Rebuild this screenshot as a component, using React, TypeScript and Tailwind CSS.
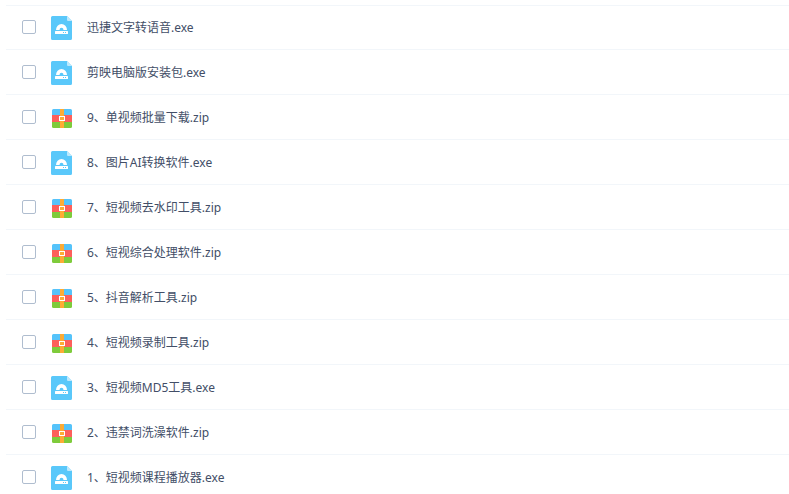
import { useState } from 'react';

type FileItem = { name: string; type: 'exe' | 'zip' };

const files: FileItem[] = [
  { name: '迅捷文字转语音.exe', type: 'exe' },
  { name: '剪映电脑版安装包.exe', type: 'exe' },
  { name: '9、单视频批量下载.zip', type: 'zip' },
  { name: '8、图片AI转换软件.exe', type: 'exe' },
  { name: '7、短视频去水印工具.zip', type: 'zip' },
  { name: '6、短视综合处理软件.zip', type: 'zip' },
  { name: '5、抖音解析工具.zip', type: 'zip' },
  { name: '4、短视频录制工具.zip', type: 'zip' },
  { name: '3、短视频MD5工具.exe', type: 'exe' },
  { name: '2、违禁词洗澡软件.zip', type: 'zip' },
  { name: '1、短视频课程播放器.exe', type: 'exe' },
];

function ExeIcon() {
  return (
    <svg viewBox="0 0 22 24" className="h-6 w-[22px]" aria-hidden="true">
      <path d="M1.5 0H16l5 5v17.5a1.5 1.5 0 0 1-1.5 1.5h-18A1.5 1.5 0 0 1 0 22.5v-21A1.5 1.5 0 0 1 1.5 0z" fill="#5ac8fa" />
      <path d="M16 0l5 5h-4a1 1 0 0 1-1-1z" fill="#bde9fd" />
      <path d="M5 14a5.5 6 0 0 1 11 0h-3.500a2 2.200 0 0 0-4 0z" fill="#fff" />
      <rect x="4" y="15" width="13" height="3" rx="0.5" fill="#fff" />
      <path d="M12 16h1v1h-1zM14 16h1v1h-1z" fill="#5ac8fa" />
    </svg>
  );
}

function ZipIcon() {
  return (
    <svg viewBox="0 0 22 24" className="h-6 w-[22px]" aria-hidden="true">
      <path d="M1 9V4.500A1.500 1.500 0 0 1 2.500 3h17A1.500 1.500 0 0 1 21 4.500V9z" fill="#55c3fa" />
      <path d="M1 9h20v7H1z" fill="#fc5f5b" />
      <path d="M1 16h20v4.500a1.500 1.500 0 0 1-1.500 1.500h-17A1.500 1.500 0 0 1 1 20.500z" fill="#7ecb3b" />
      <path d="M9 3h4v19H9z" fill="#fdab35" />
      <rect x="8.500" y="10.500" width="5" height="4" fill="#fdab35" stroke="#fff" />
    </svg>
  );
}

export default function App() {
  const [checked, setChecked] = useState<string[]>([]);

  const toggle = (name: string) => {
    setChecked((list) => (list.includes(name) ? list.filter((n) => n !== name) : [...list, name]));
  };

  return (
    <main className="h-screen overflow-hidden bg-white pt-[5px] pl-1.5 font-['Noto_Sans','Noto_Sans_CJK_SC',sans-serif]">
      <ul className="border-t border-[#f2f6fa]">
        {files.map((file) => (
          <li key={file.name} className="h-[45px] border-b border-[#f2f6fa] first:-mt-px">
            <label className="flex h-full items-center pl-4 text-xs text-[#424e67]">
              <input
                type="checkbox"
                checked={checked.includes(file.name)}
                onChange={() => toggle(file.name)}
                className="mr-[15px] size-3.5 shrink-0 appearance-none rounded-xs border border-[#afbdcf] bg-white checked:bg-[#5ac8fa]"
              />
              <span className="flex items-center gap-3.5 pt-0.5">
                {file.type === 'exe' ? <ExeIcon /> : <ZipIcon />}
                {file.name}
              </span>
            </label>
          </li>
        ))}
      </ul>
    </main>
  );
}
